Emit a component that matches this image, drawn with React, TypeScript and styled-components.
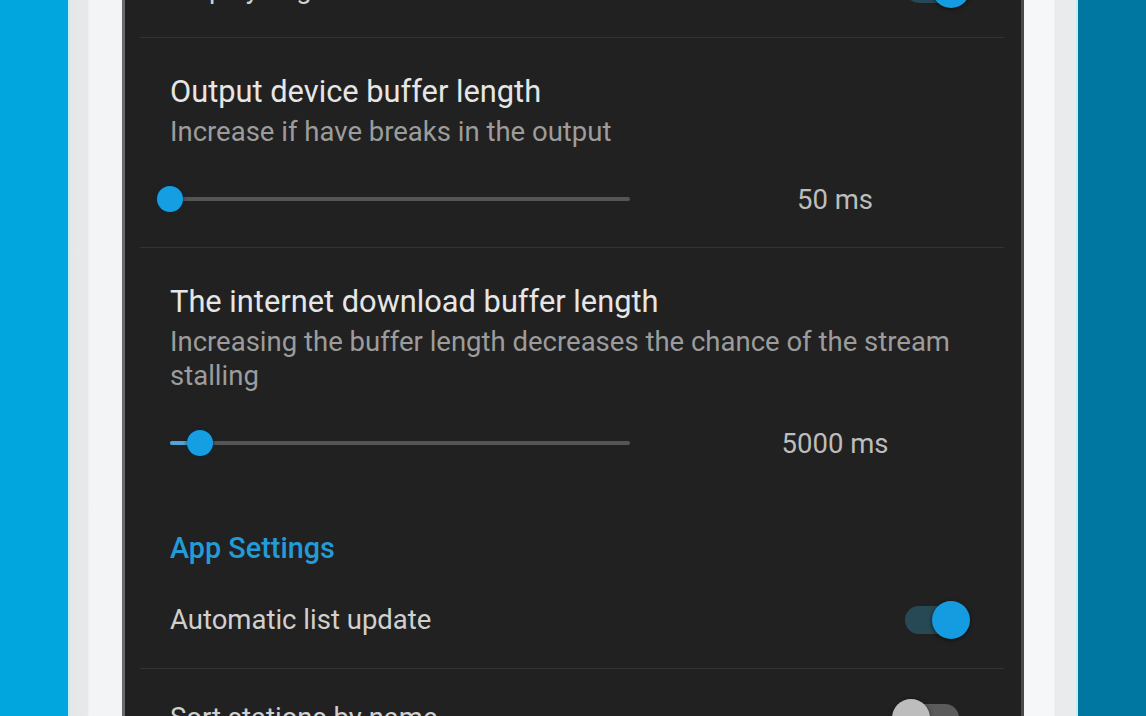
import * as React from "react";
import styled, { createGlobalStyle } from "styled-components";

const GlobalStyle = createGlobalStyle`
  html, body {
    margin: 0;
    padding: 0;
    height: 716px;
    overflow: hidden;
    font-family: Roboto, "Noto Sans", "Liberation Sans", sans-serif;
  }
`;

const Page = styled.div`
  display: flex;
  height: 716px;
  background: linear-gradient(90deg, #00a6dd 50%, #0077a0 50%);
`;

const Device = styled.div`
  flex: 1;
  display: flex;
  margin: 0 68px;
  padding: 0 52px;
  border-left: 2px solid #c6ecf8;
  border-right: 2px solid #c6ecf8;
  background: linear-gradient(
    90deg,
    #e6e7e9 0,
    #e8e9eb 18px,
    #f3f4f6 19px,
    #f6f7f9 calc(100% - 22px),
    #eaebed calc(100% - 21px)
  );
`;

const Panel = styled.div`
  flex: 1;
  display: flex;
  flex-direction: column;
  overflow: hidden;
  background: #212121;
  border-left: 3px solid #6a6a6a;
  border-right: 3px solid #4a4a4a;
`;

const Item = styled.div<{ $divider?: boolean; $height?: number }>`
  margin: 0 17px 0 15px;
  padding: 0 35px 0 30px;
  min-height: ${(p) => (p.$height ? `${p.$height}px` : "auto")};
  border-bottom: ${(p) => (p.$divider ? "1px solid #333333" : "none")};
  flex-shrink: 0;
`;

const SwitchItem = styled(Item)`
  display: flex;
  align-items: center;
  justify-content: space-between;
`;

const ScrolledItem = styled(SwitchItem)`
  margin-top: -60px;
`;

const SliderItem = styled(Item)`
  padding-top: 36px;
  padding-bottom: 28px;
`;

const Title = styled.div`
  font-size: 30.8px;
  line-height: 36px;
  color: #e6e6e6;
`;

const Summary = styled.div`
  margin-top: 5px;
  font-size: 27.5px;
  line-height: 34px;
  color: #9c9c9c;
`;

const SwitchLabel = styled.div`
  font-size: 27.5px;
  line-height: 34px;
  color: #d0d0d0;
`;

const Category = styled.div`
  margin: 40px 17px 7px 15px;
  padding-left: 30px;
  font-size: 28.8px;
  font-weight: 500;
  line-height: 34px;
  color: #229bd8;
`;

const SliderRow = styled.div`
  margin-top: 30px;
  height: 40px;
  display: grid;
  grid-template-columns: 460px 135px 140px;
  align-items: center;
`;

const Track = styled.div`
  position: relative;
  height: 4px;
  background: #555555;
  border-radius: 2px;
`;

const Fill = styled.div`
  position: absolute;
  left: 0;
  top: 0;
  bottom: 0;
  background: #4fa6d6;
  border-radius: 2px;
`;

const Thumb = styled.div`
  position: absolute;
  top: 50%;
  width: 26px;
  height: 26px;
  margin: -13px 0 0 -13px;
  border-radius: 50%;
  background: #169ee3;
  box-shadow: 0 0 4px rgba(0, 40, 70, 0.8);
`;

const Value = styled.div`
  grid-column: 3;
  text-align: center;
  font-size: 27.5px;
  color: #bdbdbd;
  white-space: nowrap;
`;

const SwitchTrack = styled.div<{ $on: boolean }>`
  position: relative;
  width: 60px;
  height: 28px;
  border-radius: 14px;
  margin-right: ${(p) => (p.$on ? "4px" : "10px")};
  background: ${(p) => (p.$on ? "#274955" : "#5b5b5b")};
`;

const SwitchThumb = styled.div<{ $on: boolean }>`
  position: absolute;
  top: -5px;
  ${(p) => (p.$on ? "right: -5px;" : "left: -7px;")}
  width: 38px;
  height: 38px;
  border-radius: 50%;
  background: ${(p) => (p.$on ? "#159be0" : "#bdbdbd")};
  box-shadow: 0 1px 4px rgba(0, 0, 0, 0.6);
`;

const Switch = ({ on }: { on: boolean }) => (
  <SwitchTrack $on={on}>
    <SwitchThumb $on={on} />
  </SwitchTrack>
);

const Slider = ({ value, fraction }: { value: string; fraction: number }) => (
  <SliderRow>
    <Track>
      {fraction > 0 ? <Fill style={{ width: `${fraction * 100}%` }} /> : null}
      <Thumb style={{ left: `${fraction * 100}%` }} />
    </Track>
    <Value>{value}</Value>
  </SliderRow>
);

export default function App() {
  return (
    <>
      <GlobalStyle />
      <Page>
        <Device>
          <Panel>
            <ScrolledItem $divider $height={97}>
              <SwitchLabel>Display flags in the list</SwitchLabel>
              <Switch on />
            </ScrolledItem>

            <SliderItem $divider>
              <Title>Output device buffer length</Title>
              <Summary>Increase if have breaks in the output</Summary>
              <Slider value="50 ms" fraction={0} />
            </SliderItem>

            <SliderItem>
              <Title>The internet download buffer length</Title>
              <Summary>
                Increasing the buffer length decreases the chance of the stream
                stalling
              </Summary>
              <Slider value="5000 ms" fraction={0.066} />
            </SliderItem>

            <Category>App Settings</Category>

            <SwitchItem $divider $height={96}>
              <SwitchLabel>Automatic list update</SwitchLabel>
              <Switch on />
            </SwitchItem>

            <SwitchItem $height={98}>
              <SwitchLabel>Sort stations by name</SwitchLabel>
              <Switch on={false} />
            </SwitchItem>
          </Panel>
        </Device>
      </Page>
    </>
  );
}
